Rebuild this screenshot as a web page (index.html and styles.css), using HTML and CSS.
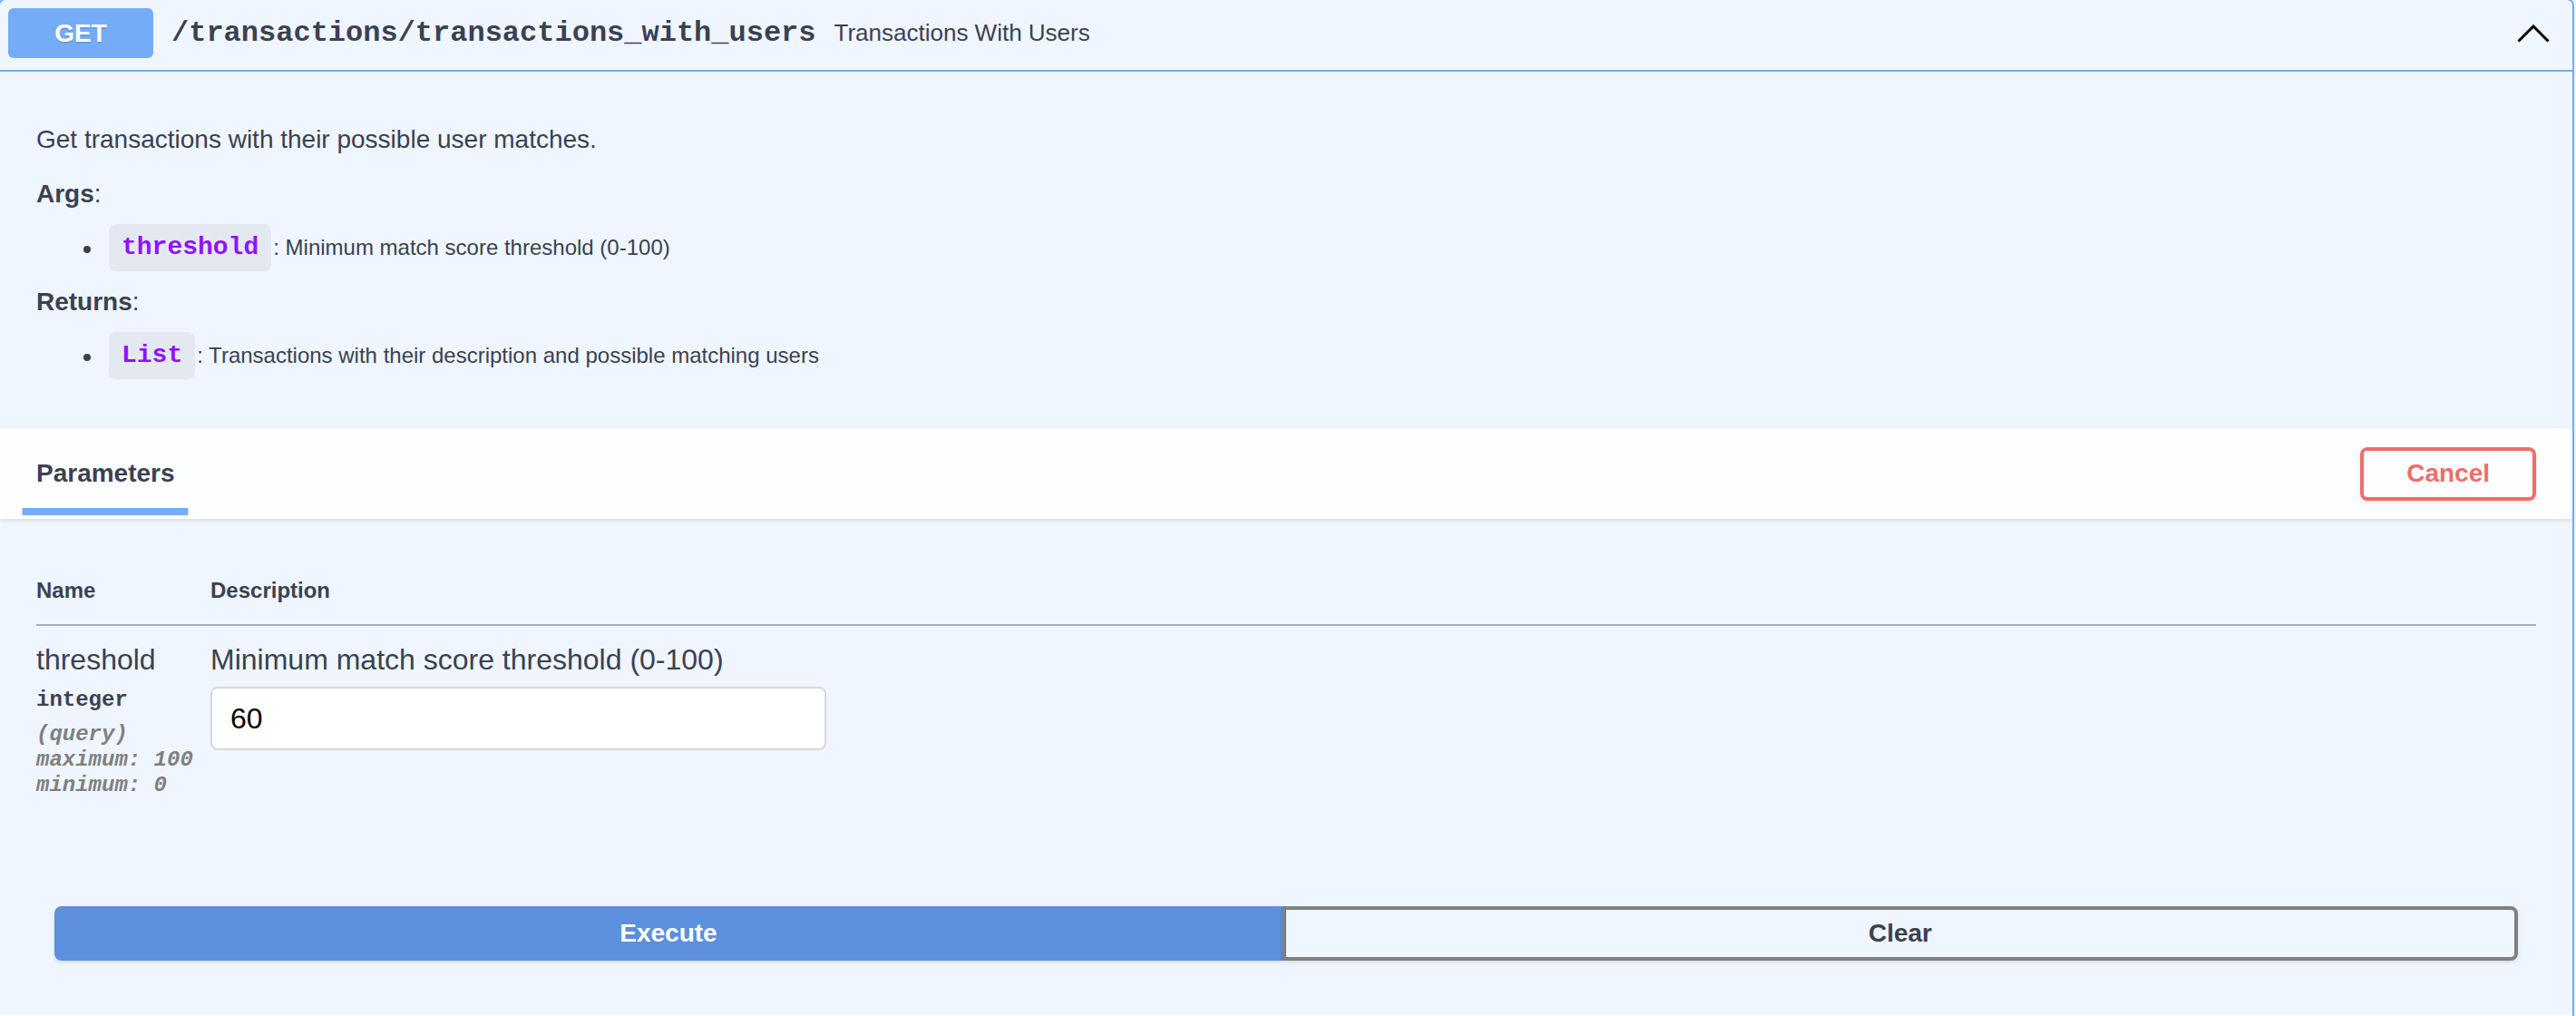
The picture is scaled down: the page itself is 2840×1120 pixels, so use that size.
FILE: index.html
```html
<!DOCTYPE html>
<html lang="en">
<head>
<meta charset="utf-8">
<title>Transactions With Users</title>
<link rel="stylesheet" href="styles.css">
</head>
<body>
<div class="opblock">
  <div class="summary">
    <span class="method">GET</span>
    <span class="path">/transactions/transactions_with_users</span>
    <span class="summary-desc">Transactions With Users</span>
    <svg class="arrow" width="36" height="20" viewBox="0 0 36 20"><polyline points="1.5,18.5 18,2 34.5,18.5" fill="none" stroke="#000" stroke-width="3"/></svg>
  </div>
  <div class="description">
    <p class="lead">Get transactions with their possible user matches.</p>
    <p class="label"><strong>Args</strong>:</p>
    <ul class="list">
      <li><code>threshold</code><span class="li-text">: Minimum match score threshold (0-100)</span></li>
    </ul>
    <p class="label label-2"><strong>Returns</strong>:</p>
    <ul class="list">
      <li><code>List</code><span class="li-text">: Transactions with their description and possible matching users</span></li>
    </ul>
  </div>
  <div class="section-header">
    <div class="tab"><h4>Parameters</h4></div>
    <button class="btn-cancel">Cancel</button>
  </div>
  <div class="params">
    <div class="params-head">
      <div class="col-name">Name</div>
      <div class="col-desc">Description</div>
    </div>
    <div class="param-row">
      <div class="col-name">
        <div class="param-name">threshold</div>
        <div class="param-type">integer</div>
        <div class="param-in">(query)</div>
        <div class="param-ext">maximum: 100</div>
        <div class="param-ext">minimum: 0</div>
      </div>
      <div class="col-desc">
        <div class="param-desc">Minimum match score threshold (0-100)</div>
        <input class="param-input" type="text" value="60">
      </div>
    </div>
  </div>
  <div class="btn-group">
    <button class="btn-execute">Execute</button>
    <button class="btn-clear">Clear</button>
  </div>
  <div class="section-header section-next"></div>
</div>
</body>
</html>
```

FILE: styles.css
```css
html, body {
  margin: 0;
  padding: 0;
}
body {
  background: #f4f5f7;
  font-family: "Liberation Sans", Arial, sans-serif;
  color: #3b4151;
  overflow: hidden;
}
.opblock {
  box-sizing: border-box;
  width: 2840px;
  margin: -2px 0 0 -2px;
  border: 2px solid #73aef5;
  border-radius: 8px;
  background: #eff6ff;
}
.summary {
  display: flex;
  align-items: center;
  padding: 9px 25px 13px 9px;
  border-bottom: 2px solid #73aef5;
}
.method {
  box-sizing: border-box;
  width: 160px;
  height: 55px;
  line-height: 55px;
  text-align: center;
  background: #74adf6;
  color: #fff;
  font-weight: bold;
  font-size: 28px;
  border-radius: 6px;
  text-shadow: 0 2px 0 rgba(0,0,0,.1);
}
.path {
  padding: 0 20px;
  font-family: "Liberation Mono", "Courier New", monospace;
  font-weight: bold;
  font-size: 32px;
  color: #3b4151;
}
.summary-desc {
  flex: 1;
  font-size: 26px;
  color: #3b4151;
}
.arrow {
  display: block;
}
.description {
  padding: 55px 40px 54px;
}
.description p {
  margin: 0;
  font-size: 28px;
  line-height: 40px;
}
.description .label {
  margin-top: 20px;
}
.description .label-2 {
  margin-top: 14px;
}
.list {
  list-style: none;
  margin: 13px 0 0;
  padding: 0;
}
.list li {
  display: flex;
  align-items: center;
  padding-left: 52px;
  font-size: 24px;
}
.list li::before {
  content: "";
  width: 8px;
  height: 8px;
  border-radius: 50%;
  background: #3b4151;
  margin: 4px 20px 0 0;
}
.list code {
  font-family: "Liberation Mono", "Courier New", monospace;
  font-weight: bold;
  font-size: 28px;
  line-height: 32px;
  color: #9012fe;
  background: #e4e9f1;
  padding: 10px 14px;
  border-radius: 8px;
}
.li-text {
  margin-left: 2px;
}
.section-header {
  display: flex;
  align-items: center;
  justify-content: space-between;
  box-sizing: border-box;
  height: 100px;
  padding: 0 40px;
  background: rgba(255,255,255,.85);
  box-shadow: 0 2px 4px rgba(0,0,0,.1);
}
.tab h4 {
  position: relative;
  margin: 0;
  font-size: 28px;
  line-height: 40px;
  font-weight: bold;
  color: #3b4151;
}
.tab h4::after {
  content: "";
  position: absolute;
  left: 50%;
  bottom: -26px;
  width: 120%;
  height: 8px;
  transform: translateX(-50%);
  background: #73aef5;
}
.btn-cancel {
  box-sizing: border-box;
  height: 59px;
  padding: 0 47px;
  border: 4px solid #ef6e6a;
  border-radius: 8px;
  background: transparent;
  color: #ef6e6a;
  font-family: "Liberation Sans", Arial, sans-serif;
  font-weight: bold;
  font-size: 28px;
  box-shadow: 0 2px 4px rgba(0,0,0,.1);
}
.params {
  padding: 40px 40px 0;
}
.params-head {
  display: flex;
  padding: 24px 0 22px;
  border-bottom: 2px solid #aab0bb;
  font-size: 24px;
  line-height: 30px;
  font-weight: bold;
}
.col-name {
  width: 192px;
  flex: none;
}
.col-desc {
  flex: 1;
}
.param-row {
  display: flex;
  padding-top: 17px;
}
.param-name, .param-desc {
  font-size: 32px;
  line-height: 40px;
  color: #3b4151;
}
.param-type {
  margin-top: 10px;
  font-family: "Liberation Mono", "Courier New", monospace;
  font-weight: bold;
  font-size: 24px;
  line-height: 30px;
}
.param-in {
  margin-top: 9px;
}
.param-in, .param-ext {
  font-family: "Liberation Mono", "Courier New", monospace;
  font-weight: bold;
  font-style: italic;
  font-size: 24px;
  line-height: 28px;
  color: #808080;
}
.param-input {
  display: block;
  box-sizing: border-box;
  width: 679px;
  height: 70px;
  margin-top: 10px;
  padding: 0 20px;
  border: 2px solid #d9d9d9;
  border-radius: 8px;
  background: #fff;
  font-family: "Liberation Sans", Arial, sans-serif;
  font-size: 32px;
  color: #000;
}
.btn-group {
  display: flex;
  margin: 119px 60px 0;
  padding-bottom: 59px;
}
.btn-group button {
  flex: 1 1 0;
  min-width: 0;
  box-sizing: border-box;
  height: 60px;
  padding: 0;
  font-family: "Liberation Sans", Arial, sans-serif;
  font-weight: bold;
  font-size: 28px;
  box-shadow: 0 2px 4px rgba(0,0,0,.1);
}
.btn-execute {
  border: none;
  border-radius: 8px 0 0 8px;
  background: #5c8fdc;
  color: #fff;
}
.btn-clear {
  border: 4px solid #808080;
  border-radius: 0 8px 8px 0;
  background: transparent;
  color: #3b4151;
}
.section-next {
  height: 100px;
}
```
